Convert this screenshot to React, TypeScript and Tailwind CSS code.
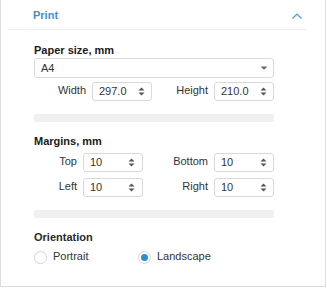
import React from "react";

function Spinner() {
  return (
    <svg width="7" height="11" viewBox="0 0 7 11" className="shrink-0">
      <path d="M0.5 4.5 L3.5 1.5 L6.5 4.5 Z" fill="#555" />
      <path d="M0.5 6.5 L3.5 9.5 L6.5 6.5 Z" fill="#555" />
    </svg>
  );
}

function NumInput({ value, pr }: { value: string; pr: string }) {
  return (
    <div
      className={`flex h-[19px] w-[60px] items-center justify-between rounded-[3px] border border-[#d9d9d9] bg-white pl-[6px] ${pr}`}
    >
      <span className="text-[11px] leading-[13px] text-[#333] -mt-[1px]">{value}</span>
      <Spinner />
    </div>
  );
}

function Field({
  label,
  value,
  pr = "pr-[5px]",
}: {
  label: string;
  value: string;
  pr?: string;
}) {
  return (
    <div className="flex items-center justify-end gap-[6px]">
      <span className="text-[11px] leading-[13px] text-[#333] -mt-[2px]">{label}</span>
      <NumInput value={value} pr={pr} />
    </div>
  );
}

function Radio({ checked }: { checked?: boolean }) {
  return (
    <div className="flex h-[13px] w-[13px] shrink-0 items-center justify-center rounded-full border border-[#d4d4d4] bg-white">
      {checked && <div className="h-[7px] w-[7px] rounded-full bg-[#2b8fd6]" />}
    </div>
  );
}

export default function App() {
  return (
    <div
      className="h-[287px] w-[326px] border-x border-b border-[#dcdcdc] bg-white"
      style={{ fontFamily: '"Liberation Sans", Arial, sans-serif' }}
    >
      {/* Header */}
      <div className="ml-[7px] w-[298px]">
        <div className="flex h-[29px] items-start justify-between pl-[25px] pr-[4px] pt-[9px]">
          <span className="text-[11px] font-bold leading-[13px] text-[#3d8fd1]">Print</span>
          <svg width="10" height="6" viewBox="0 0 10 6" className="mt-[4px]">
            <path d="M0.5 5.5 L5 1 L9.5 5.5" fill="none" stroke="#4a9ad8" strokeWidth="1.2" />
          </svg>
        </div>
        <div className="flex h-px">
          <div className="h-px w-[17px] bg-[#eeeeee]" />
          <div className="h-px w-px" />
          <div className="h-px flex-1 bg-[#eeeeee]" />
        </div>
      </div>

      <div className="ml-[33px] w-[240px]">
        {/* Paper size */}
        <div className="mt-[14px] text-[11px] font-bold leading-[13px] text-[#1a1a1a]">
          Paper size, mm
        </div>
        <div className="mt-[1px] flex h-[20px] items-center justify-between rounded-[3px] border border-[#d9d9d9] pl-[6px] pr-[5px]">
          <span className="text-[11px] leading-[13px] text-[#333]">A4</span>
          <svg width="8" height="4" viewBox="0 0 8 4">
            <path d="M0.5 0.5 L7.5 0.5 L4 3.8 Z" fill="#666" />
          </svg>
        </div>
        <div className="mt-[4px] flex items-center">
          <div className="flex w-[118px] justify-end">
            <Field label="Width" value="297.0" pr="pr-[6px]" />
          </div>
          <div className="flex flex-1 justify-end">
            <Field label="Height" value="210.0" pr="pr-[6px]" />
          </div>
        </div>

        <div className="mt-[13px] h-[8px] w-[240px] bg-[#f0f0f0]" />

        {/* Margins */}
        <div className="mt-[13px] text-[11px] font-bold leading-[13px] text-[#1a1a1a]">
          Margins, mm
        </div>
        <div className="mt-[5px] flex items-center">
          <div className="flex w-[109px] justify-end">
            <Field label="Top" value="10" pr="pr-[7px]" />
          </div>
          <div className="flex flex-1 justify-end">
            <Field label="Bottom" value="10" pr="pr-[6px]" />
          </div>
        </div>
        <div className="mt-[6px] flex items-center">
          <div className="flex w-[109px] justify-end">
            <Field label="Left" value="10" pr="pr-[7px]" />
          </div>
          <div className="flex flex-1 justify-end">
            <Field label="Right" value="10" pr="pr-[6px]" />
          </div>
        </div>

        <div className="mt-[13px] h-[8px] w-[240px] bg-[#f0f0f0]" />

        {/* Orientation */}
        <div className="mt-[13px] text-[11px] font-bold leading-[13px] text-[#2a2a2a]">
          Orientation
        </div>
        <div className="mt-[7px] flex items-center">
          <div className="flex w-[104px] items-center gap-[6px]">
            <Radio />
            <span className="-mt-[2px] text-[11px] leading-[13px] text-[#333]">Portrait</span>
          </div>
          <div className="flex items-center gap-[6px]">
            <Radio checked />
            <span className="-mt-[2px] text-[11px] leading-[13px] text-[#333]">Landscape</span>
          </div>
        </div>
      </div>
    </div>
  );
}
